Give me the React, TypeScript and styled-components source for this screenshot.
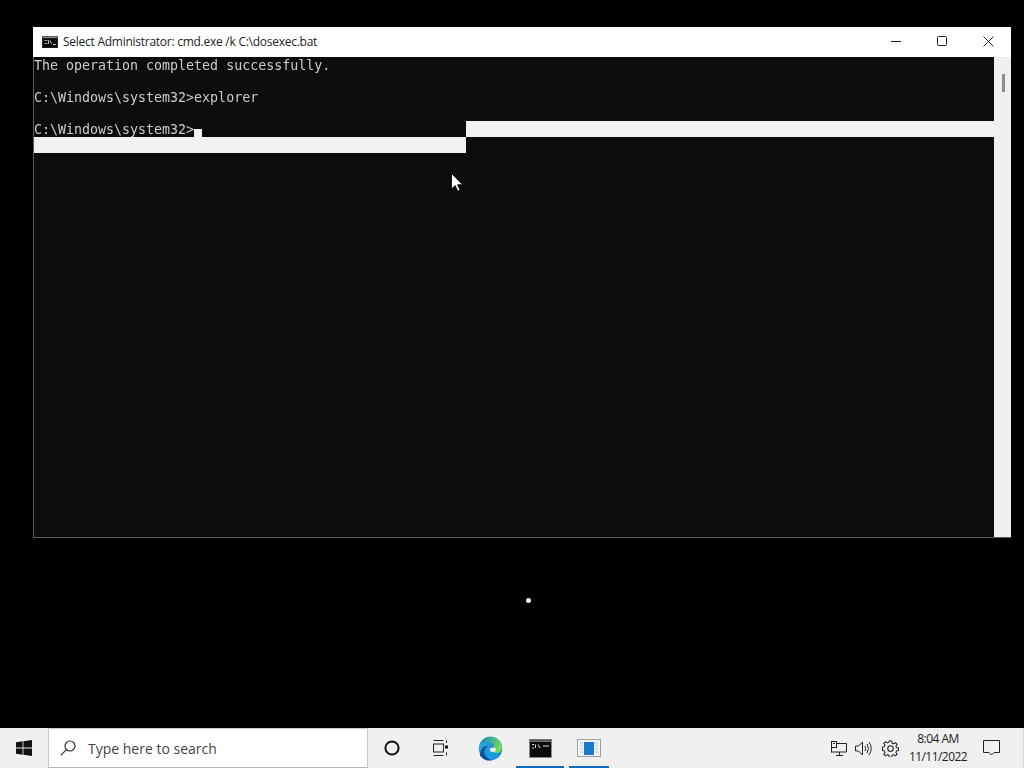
import React from "react";
import styled, { createGlobalStyle } from "styled-components";

const Global = createGlobalStyle`
  html, body { margin: 0; padding: 0; background: #000; overflow: hidden; }
  * { box-sizing: border-box; }
`;
const Screen = styled.div`
  position: relative; width: 1024px; height: 768px; background: #000;
  display: flex; flex-direction: column; overflow: hidden;
  font-family: "Open Sans", "Noto Sans", sans-serif;
`;
const Desktop = styled.main`flex: 1; padding: 27px 13px 0 33px;`;
const Window = styled.section`
  width: 978px; height: 511px; display: flex; flex-direction: column;
  background: #f0f0f0;
`;
const TitleBar = styled.header`
  height: 30px; flex: none; background: #fff; display: flex; align-items: center;
  padding-left: 9px; color: #222;
`;
const TitleText = styled.span`
  margin-left: 5px; padding-bottom: 1px; font-size: 12px; letter-spacing: -0.26px; white-space: nowrap; flex: 1;
`;
const WinButton = styled.button`
  width: 46px; height: 30px; border: 0; padding: 0 0 2px; background: none;
  display: flex; align-items: center; justify-content: center;
`;
const Body = styled.div`flex: 1; display: flex; min-height: 0; border: solid #5a5a5a; border-width: 0 1px 1px 1px;`;
const Console = styled.div`
  flex: 1; background: #0c0c0c; color: #ccc; font-family: "DejaVu Sans Mono", "Liberation Mono", monospace;
  font-size: 13.3px; line-height: 18px; white-space: pre;
`;
const Line = styled.div`height: 16px; display: flex; will-change: transform;`;
const Cursor = styled.span`
  width: 8px; height: 8px; margin-top: 8px; background: #f2f2f2;
`;
const Selection = styled.div<{ $width: number; $offset?: number }>`
  height: 16px; width: ${p => p.$width}px; margin-left: ${p => p.$offset ?? 0}px; background: #f2f2f2;
`;
const Scrollbar = styled.div`
  width: 17px; flex: none; background: #f0f0f0; display: flex; justify-content: center;
  padding-top: 17px;
`;
const Thumb = styled.div`width: 3px; height: 18px; background: #8d8d8d; margin-left: 2px;`;
const Pointer = styled.svg`position: absolute; left: 451px; top: 173px;`;
const Dot = styled.div`
  position: absolute; left: 526px; top: 598px; width: 5px; height: 5px; border-radius: 50%; background: #eee;
`;
const Taskbar = styled.footer`
  height: 40px; flex: none; background: #f0f0f0; display: flex; align-items: stretch; color: #111;
  padding-right: 9px; border-right: 1px solid #d8d8d8;
`;
const StartButton = styled.div`width: 48px; display: flex; align-items: center; justify-content: center;`;
const SearchBox = styled.div`
  width: 320px; background: #fff; border: 1px solid #c8c8c8; border-bottom-color: #b8b8b8;
  display: flex; align-items: center; padding-left: 11px; gap: 12px;
  font-size: 14px; color: #444;
`;
const TaskSlot = styled.div<{ $w: number; $bar?: number }>`
  position: relative; width: ${p => p.$w}px;
  display: flex; align-items: center; justify-content: center;
  &::after {
    content: ""; display: ${p => (p.$bar ? "block" : "none")}; position: absolute; bottom: 0; left: 50%;
    width: ${p => p.$bar}px; height: 2px; margin-left: ${p => -(p.$bar ?? 0) / 2}px; background: #0f6cbd;
  }
`;
const EdgeIcon = styled.svg`margin-left: 1px;`;
const Spacer = styled.div`flex: 1;`;
const Tray = styled.div`display: flex; align-items: center;`;
const TrayIcon = styled.div<{ $w: number }>`width: ${p => p.$w}px; display: flex; align-items: center; justify-content: center;`;
const Clock = styled.div`
  width: 60px; text-align: center; font-size: 12px; line-height: 18px; color: #222; white-space: nowrap;
  letter-spacing: -0.55px;
`;

export default function App() {
  return (
    <Screen>
      <Global />
      <Desktop>
        <Window>
          <TitleBar>
            <svg width="16" height="12" viewBox="0 0 16 12">
              <rect width="16" height="12" fill="#2c2c2c" />
              <rect x=".5" y=".5" width="15" height="1.500" fill="#8a8a8a" />
              <rect x="1" y="2.500" width="14" height="9" fill="#0a0a0a" />
              <path d="M2.500 4.500h2M2.500 7.500h2M5.500 4.500h1v3h-1M8 4.500l1.500 3M11 8.500h3" stroke="#ddd" strokeWidth="0.9" fill="none" />
            </svg>
            <TitleText>Select Administrator: cmd.exe /k C:\dosexec.bat</TitleText>
            <WinButton aria-label="Minimize">
              <svg width="10" height="10" viewBox="0 0 10 10"><path d="M0 5.500h10" stroke="#222" strokeWidth="1" /></svg>
            </WinButton>
            <WinButton aria-label="Maximize">
              <svg width="10" height="10" viewBox="0 0 10 10"><rect x=".5" y=".5" width="9" height="9" rx="1" fill="none" stroke="#222" /></svg>
            </WinButton>
            <WinButton aria-label="Close">
              <svg width="11" height="11" viewBox="0 0 11 11"><path d="M.5.5l10 10M10.500.5l-10 10" stroke="#222" strokeWidth="1" /></svg>
            </WinButton>
          </TitleBar>
          <Body>
            <Console>
              <Line>The operation completed successfully.</Line>
              <Line> </Line>
              <Line>C:\Windows\system32&gt;explorer</Line>
              <Line> </Line>
              <Line>
                C:\Windows\system32&gt;<Cursor />
                <Selection $width={528} $offset={264} />
              </Line>
              <Line><Selection $width={432} /></Line>
            </Console>
            <Scrollbar><Thumb /></Scrollbar>
          </Body>
        </Window>
      </Desktop>
      <Taskbar>
        <StartButton>
          <svg width="16" height="16" viewBox="0 0 16 16" fill="#111">
            <path d="M0 2.200l6.600-.9v6.300H0zM7.400 1.200L16 0v7.600H7.400zM0 8.400h6.600v6.300L0 13.800zM7.400 8.400H16V16l-8.600-1.200z" />
          </svg>
        </StartButton>
        <SearchBox>
          <svg width="16" height="16" viewBox="0 0 16 16" fill="none" stroke="#333" strokeWidth="1.200">
            <circle cx="10" cy="6" r="5" />
            <path d="M6.400 9.600L.8 15.400" />
          </svg>
          Type here to search
        </SearchBox>
        <TaskSlot $w={48}>
          <svg width="16" height="16" viewBox="0 0 16 16"><circle cx="8" cy="8" r="6.600" fill="none" stroke="#111" strokeWidth="2" /></svg>
        </TaskSlot>
        <TaskSlot $w={48}>
          <svg width="15" height="16" viewBox="0 0 15 16" fill="none" stroke="#222">
            <path d="M.5.5h10M.5 15.500h10" />
            <rect x=".5" y="4" width="10" height="8" />
            <path d="M13.500 .5v2.500M13.500 12.500v3" />
            <rect x="12" y="5.500" width="3" height="3" fill="#111" stroke="none" />
          </svg>
        </TaskSlot>
        <TaskSlot $w={52}>
          <EdgeIcon width="25" height="25" viewBox="0 0 32 32">
            <defs>
              <linearGradient id="edgeA" x1="0" y1="0" x2="1" y2="1">
                <stop offset="0" stopColor="#35c1f1" /><stop offset="1" stopColor="#0c59a4" />
              </linearGradient>
              <linearGradient id="edgeB" x1="0" y1="0" x2="1" y2="0.4">
                <stop offset="0" stopColor="#0f7fc9" /><stop offset="1" stopColor="#6fdc5a" />
              </linearGradient>
            </defs>
            <circle cx="16" cy="16" r="15" fill="url(#edgeA)" />
            <path d="M2 11C5 3 12 1 16 1c8 0 15 6 15 14 0 4-3 7-7.500 7-3.500 0-6-1.500-6-2.500 0-1 3-1 3-5 0-4-4-7-8-7-5 0-9 2-10.500 3.500z" fill="url(#edgeB)" />
            <path d="M13 13c-4 1-6 5-4.500 10 1.500 5 7 8 11.500 7.500-4 2-13 1.500-17.500-6 0-6 4-13 10.500-11.500z" fill="#0b4f9c" />
            <path d="M15 15c1 4 4 7 8 7 3 0 5-1 6.500-2-2 6-7 10-12 10.500C12 29 9 24 9.500 20c.5-3 3-6 5.500-5z" fill="#1b9de2" opacity=".9" />
            <ellipse cx="19" cy="17.500" rx="3.800" ry="2.800" fill="#f0f0f0" />
          </EdgeIcon>
        </TaskSlot>
        <TaskSlot $w={48} $bar={48}>
          <svg width="23" height="19" viewBox="0 0 23 19">
            <rect width="23" height="19" fill="#8c8c8c" />
            <rect x=".5" y=".5" width="22" height="2" fill="#555" />
            <rect x="1" y="3" width="21" height="15" fill="#0b0b0b" />
            <path d="M3 5.500h2M3 9h2M6.500 5.500v3.500M9 5.500l2 3.500M14 7h6" stroke="#ddd" strokeWidth="1" fill="none" />
          </svg>
        </TaskSlot>
        <TaskSlot $w={50} $bar={40}>
          <svg width="24" height="18" viewBox="0 0 24 18">
            <rect x=".5" y=".5" width="23" height="17" fill="#f4f4f4" stroke="#a0a0a0" />
            <path d="M3 4h3M3 7h3M3 10h3M3 13h3M18 4h3M18 7h3M18 10h3M18 13h3" stroke="#a9c6e0" />
            <rect x="7" y="3" width="10" height="13" fill="#1a78cc" />
          </svg>
        </TaskSlot>
        <Spacer />
        <Tray>
          <TrayIcon $w={28}>
            <svg width="16" height="15" viewBox="0 0 16 15" fill="none" stroke="#222">
              <path d="M4.500 2.500h11v8.500H.5" />
              <rect x=".5" y=".5" width="5" height="6" fill="#f0f0f0" />
              <path d="M2 2.500h2M.5 6.500v5M8.500 11v3.500M5 14.500h7" />
            </svg>
          </TrayIcon>
          <TrayIcon $w={20}>
            <svg width="17" height="15" viewBox="0 0 17 15" fill="none" stroke="#222">
              <path d="M.5 5h3L7.500 1v13l-4-4h-3z" />
              <path d="M10 5q1.500 2.500 0 5M12 3q3 4.500 0 9M14 1q4.500 6.500 0 13" />
            </svg>
          </TrayIcon>
          <TrayIcon $w={35}>
            <svg width="17" height="17" viewBox="0 0 17 17" fill="none" stroke="#222" strokeWidth="1.100">
              <circle cx="8.500" cy="8.500" r="2.800" />
              <path d="M7.200.8h2.600l.4 2.300 1.500.7 2-1.300 1.800 1.800-1.300 2 .7 1.500 2 .4v2.600l-2 .4-.7 1.500 1.300 2-1.800 1.800-2-1.300-1.500.7-.4 2H7.200l-.4-2-1.500-.7-2 1.300-1.800-1.800 1.300-2-.7-1.500-2-.4V7.200l2-.4.7-1.500-1.300-2 1.800-1.800 2 1.300 1.500-.7z" transform="translate(.4 .2) scale(.95)" />
            </svg>
          </TrayIcon>
          <Clock>8:04 AM<br />11/11/2022</Clock>
          <TrayIcon $w={46}>
            <svg width="17" height="16" viewBox="0 0 17 16" fill="none" stroke="#222">
              <path d="M.5.5h16v12h-5.500L8.500 15l-2.500-2.500H.5z" />
            </svg>
          </TrayIcon>
        </Tray>
      </Taskbar>
      <Pointer width="12" height="19" viewBox="0 0 12 19">
        <path d="M.5.5v15.500l3.700-3.500 2.600 5.800 2.300-1-2.500-5.600h5z" fill="#fff" stroke="#000" strokeWidth=".8" />
      </Pointer>
      <Dot />
    </Screen>
  );
}
